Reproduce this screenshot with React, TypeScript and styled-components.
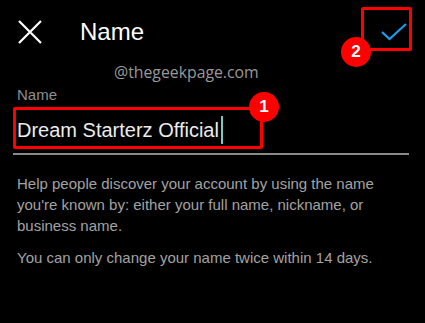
import React from "react";
import styled, { createGlobalStyle } from "styled-components";

const GlobalStyle = createGlobalStyle`
  html, body { margin: 0; padding: 0; background: #000; }
  body { font-family: "Liberation Sans", Arial, sans-serif; }
`;

const Screen = styled.div`
  position: relative;
  width: 425px;
  height: 323px;
  background: #000;
  overflow: hidden;
  color: #fff;
`;

const Header = styled.header`
  display: flex;
  align-items: center;
  height: 64px;
  padding: 0 18px;
  box-sizing: border-box;
`;

const IconButton = styled.div<{ $w?: number }>`
  display: flex;
  align-items: center;
  justify-content: center;
  width: ${(p) => p.$w ?? 24}px;
  height: 24px;
`;

const Title = styled.h1`
  margin: 0 0 0 38px;
  font-size: 24px;
  font-weight: 400;
  line-height: 28px;
  color: #fff;
  flex: 1;
`;

const Watermark = styled.div`
  position: absolute;
  left: 114px;
  top: 62px;
  font-family: "Open Sans", sans-serif;
  font-size: 15.8px;
  line-height: 20px;
  color: #999;
`;

const Field = styled.section`
  padding: 22px 16px 0 13px;
`;

const Label = styled.div`
  font-size: 15px;
  line-height: 18px;
  color: #8e8e8e;
  padding-left: 4px;
`;

const InputRow = styled.div`
  display: flex;
  align-items: center;
  margin-top: 12px;
  padding: 0 0 9px 4px;
  border-bottom: 2px solid #8a8a8a;
  font-size: 20px;
  line-height: 24px;
  color: #ececec;
`;

const Caret = styled.span`
  display: inline-block;
  width: 2px;
  height: 28px;
  margin-left: 2px;
  background: #7cc8c2;
`;

const Help = styled.section`
  padding: 18px 20px 0 17px;
`;

const Para = styled.p<{ $mt?: number }>`
  margin: ${(p) => p.$mt ?? 0}px 0 0;
  font-size: 15px;
  line-height: 21px;
  color: #a3a3a3;
`;

const Highlight = styled.div<{ $l: number; $t: number; $w: number; $h: number }>`
  position: absolute;
  left: ${(p) => p.$l}px;
  top: ${(p) => p.$t}px;
  width: ${(p) => p.$w}px;
  height: ${(p) => p.$h}px;
  border: 3px solid #ff0000;
  border-radius: 2px;
  box-sizing: border-box;
  pointer-events: none;
`;

const Badge = styled.div<{ $cx: number; $cy: number }>`
  position: absolute;
  left: ${(p) => p.$cx - 15}px;
  top: ${(p) => p.$cy - 15}px;
  width: 30px;
  height: 30px;
  border-radius: 50%;
  background: #ff0000;
  color: #fff;
  display: flex;
  align-items: center;
  justify-content: center;
  font-family: "Liberation Sans", Arial, sans-serif;
  font-weight: 700;
  font-size: 17px;
`;

export default function App() {
  return (
    <Screen>
      <GlobalStyle />
      <Header>
        <IconButton>
          <svg width="24" height="24" viewBox="0 0 24 24">
            <path d="M1 1 L23 23 M23 1 L1 23" stroke="#fff" strokeWidth="2.2" fill="none" />
          </svg>
        </IconButton>
        <Title>Name</Title>
        <IconButton $w={26}>
          <svg width="26" height="18" viewBox="0 0 26 18">
            <path d="M1 9 L8.5 16 L25 1" stroke="#1d9bf0" strokeWidth="2.2" fill="none" />
          </svg>
        </IconButton>
      </Header>
      <Watermark>@thegeekpage.com</Watermark>
      <Field>
        <Label>Name</Label>
        <InputRow>
          <span>Dream Starterz Official</span>
          <Caret />
        </InputRow>
      </Field>
      <Help>
        <Para>
          Help people discover your account by using the name you're known by: either your full
          name, nickname, or business name.
        </Para>
        <Para $mt={11}>You can only change your name twice within 14 days.</Para>
      </Help>
      <Highlight $l={13} $t={107} $w={250} $h={42} />
      <Badge $cx={264} $cy={107}>1</Badge>
      <Highlight $l={361} $t={7} $w={51} $h={44} />
      <Badge $cx={356} $cy={52}>2</Badge>
    </Screen>
  );
}
